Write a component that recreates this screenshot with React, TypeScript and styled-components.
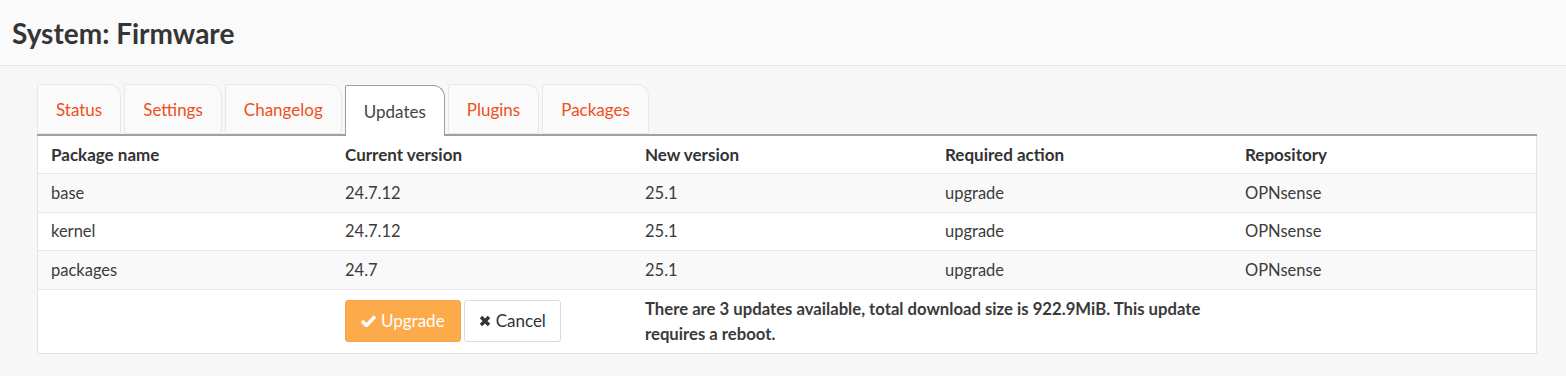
import styled, { createGlobalStyle } from "styled-components";

const GlobalStyle = createGlobalStyle`
  html, body {
    margin: 0;
    padding: 0;
    background: #f7f7f7;
    font-family: Lato, "Open Sans", sans-serif;
    color: #333;
  }
`;

const PageHeader = styled.header`
  height: 65px;
  background: #fafafa;
  border-bottom: 1px solid #e6e6e6;
  display: flex;
  align-items: center;
  padding-left: 12px;
`;

const Title = styled.h1`
  margin: 0;
  font-size: 28px;
  font-weight: 700;
  color: #353535;
`;

const Content = styled.main`
  padding: 18px 29px 0 37px;
`;

const TabBar = styled.nav`
  display: flex;
  gap: 3px;
  border-bottom: 2px solid #a0a0a0;
  height: 50px;
  align-items: flex-end;
`;

const Tab = styled.div<{ $active?: boolean }>`
  height: ${({ $active }) => ($active ? "51px" : "50px")};
  margin-bottom: ${({ $active }) => ($active ? "-2px" : "0")};
  padding: 0 18px;
  display: flex;
  align-items: center;
  box-sizing: border-box;
  font-size: 17px;
  color: ${({ $active }) => ($active ? "#444" : "#f04e1a")};
  background: ${({ $active }) => ($active ? "#fff" : "#fafafa")};
  border: 1px solid ${({ $active }) => ($active ? "#9e9e9e" : "#e8e8e8")};
  border-bottom: ${({ $active }) => ($active ? "none" : "1px solid #e8e8e8")};
  border-radius: 2px 12px 0 0;
`;

const Table = styled.div`
  background: #fff;
  border: 1px solid #e3e3e3;
  border-top: none;
`;

const Row = styled.div<{ $striped?: boolean; $head?: boolean }>`
  display: grid;
  grid-template-columns: 300px 300px 300px 300px 1fr;
  box-sizing: border-box;
  height: ${({ $head }) => ($head ? "38px" : "38.5px")};
  align-items: center;
  background: ${({ $striped }) => ($striped ? "#f9f9f9" : "#fff")};
  border-bottom: 1px solid #e8e8e8;
  font-size: ${({ $head }) => ($head ? "17px" : "16.5px")};
  font-weight: ${({ $head }) => ($head ? 700 : 400)};
  color: ${({ $head }) => ($head ? "#333" : "#3c3c3c")};
  & > div:first-child {
    padding-left: 13px;
  }
  & > div:not(:first-child) {
    padding-left: 7px;
  }
`;

const Cell = styled.div``;

const FooterRow = styled.div`
  display: grid;
  grid-template-columns: 300px 300px 1fr;
  padding: 10px 0 11px;
  & > div:not(:first-child) {
    padding-left: 7px;
  }
`;

const Buttons = styled.div`
  display: flex;
  gap: 3px;
  align-items: flex-start;
`;

const Button = styled.button<{ $primary?: boolean }>`
  height: 42px;
  padding: 0 ${({ $primary }) => ($primary ? "15px" : "14px")};
  display: flex;
  align-items: center;
  gap: 5px;
  font-family: inherit;
  font-size: 17px;
  border-radius: 3px;
  border: 1px solid ${({ $primary }) => ($primary ? "#f7a444" : "#dcdcdc")};
  background: ${({ $primary }) => ($primary ? "#fdab4a" : "#fff")};
  color: ${({ $primary }) => ($primary ? "#fff" : "#333")};
`;

const Message = styled.div`
  font-size: 16.7px;
  font-weight: 700;
  line-height: 25px;
  color: #3a3a3a;
  max-width: 572px;
  margin: -3px 0 -6px;
`;

const CheckIcon = () => (
  <svg width="15" height="13" viewBox="0 0 15 13">
    <path d="M1 7 L5.5 11.5 L14 2.5" fill="none" stroke="currentColor" strokeWidth="3.6" />
  </svg>
);

const CrossIcon = () => (
  <svg width="12" height="12" viewBox="0 0 12 12">
    <path d="M2 2 L10 10 M10 2 L2 10" fill="none" stroke="currentColor" strokeWidth="3.4" />
  </svg>
);

const packages = [
  ["base", "24.7.12", "25.1", "upgrade", "OPNsense"],
  ["kernel", "24.7.12", "25.1", "upgrade", "OPNsense"],
  ["packages", "24.7", "25.1", "upgrade", "OPNsense"],
];

const tabs = ["Status", "Settings", "Changelog", "Updates", "Plugins", "Packages"];

export default function App() {
  return (
    <>
      <GlobalStyle />
      <PageHeader>
        <Title>System: Firmware</Title>
      </PageHeader>
      <Content>
        <TabBar>
          {tabs.map((t) => (
            <Tab key={t} $active={t === "Updates"}>
              {t}
            </Tab>
          ))}
        </TabBar>
        <Table>
          <Row $head>
            <Cell>Package name</Cell>
            <Cell>Current version</Cell>
            <Cell>New version</Cell>
            <Cell>Required action</Cell>
            <Cell>Repository</Cell>
          </Row>
          {packages.map((p, i) => (
            <Row key={p[0]} $striped={i % 2 === 0}>
              {p.map((v, j) => (
                <Cell key={j}>{v}</Cell>
              ))}
            </Row>
          ))}
          <FooterRow>
            <div />
            <Buttons>
              <Button $primary>
                <CheckIcon /> Upgrade
              </Button>
              <Button>
                <CrossIcon /> Cancel
              </Button>
            </Buttons>
            <Message>
              There are 3 updates available, total download size is 922.9MiB. This update
              requires a reboot.
            </Message>
          </FooterRow>
        </Table>
      </Content>
    </>
  );
}
